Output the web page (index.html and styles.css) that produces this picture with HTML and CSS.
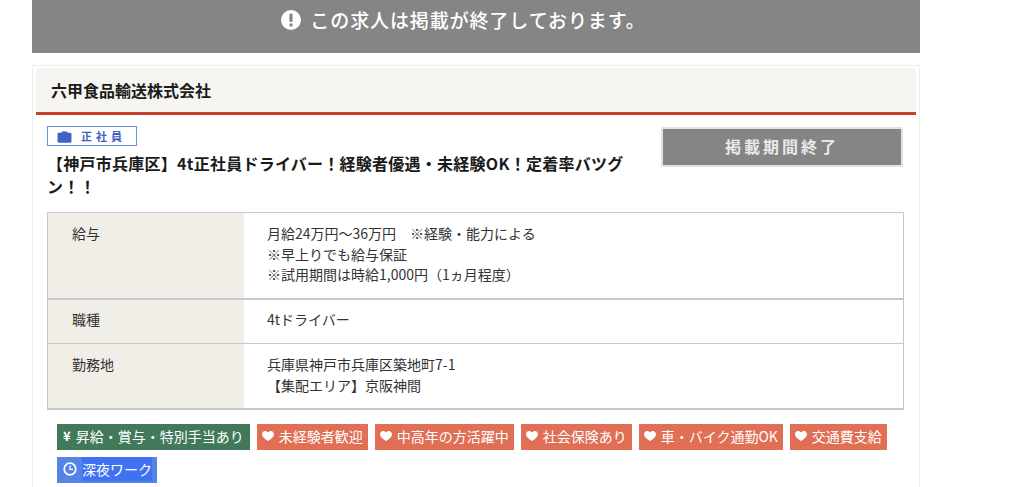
FILE: index.html
```html
<!DOCTYPE html>
<html lang="ja">
<head>
<meta charset="utf-8">
<title>求人</title>
<link rel="stylesheet" href="styles.css">
</head>
<body>
<main class="page">
  <div class="banner">
    <svg class="banner-icon" viewBox="0 0 20 20" width="20" height="20"><circle cx="10" cy="10" r="10" fill="#fff"/><rect x="8.4" y="3.5" width="3.2" height="8.5" rx="1.2" fill="#858585"/><circle cx="10" cy="15" r="1.7" fill="#858585"/></svg>
    <span>この求人は掲載が終了しております。</span>
  </div>
  <section class="card">
    <h2 class="company">六甲食品輸送株式会社</h2>
    <div class="summary">
      <div class="summary-main">
        <div class="emp-type">
          <svg viewBox="0 0 16 14" width="15" height="13"><path d="M5 3V1.500h6V3h3.200c.7 0 1.300.6 1.300 1.300V12.500c0 .7-.6 1.300-1.300 1.300H1.800C1.100 13.800.5 13.200.5 12.500V4.300C.5 3.600 1.100 3 1.800 3z" fill="#3f62c4"/></svg>
          <span>正社員</span>
        </div>
        <h3 class="job-title">【神戸市兵庫区】4t正社員ドライバー！経験者優遇・未経験OK！定着率バツグン！！</h3>
      </div>
      <div class="closed-btn">掲載期間終了</div>
    </div>
    <dl class="info">
      <div class="row row-salary">
        <dt>給与</dt>
        <dd>月給24万円～36万円　※経験・能力による<br>※早上りでも給与保証<br>※試用期間は時給1,000円（1ヵ月程度）</dd>
      </div>
      <div class="row row-type">
        <dt>職種</dt>
        <dd>4tドライバー</dd>
      </div>
      <div class="row row-place">
        <dt>勤務地</dt>
        <dd>兵庫県神戸市兵庫区築地町7-1<br>【集配エリア】京阪神間</dd>
      </div>
    </dl>
    <ul class="tags">
      <li class="tag tag-green"><span class="yen">¥</span>昇給・賞与・特別手当あり</li>
      <li class="tag tag-coral"><svg class="heart" viewBox="0 0 12 10" width="12" height="10"><path d="M6 10C2 7.500 0 5.600 0 3.200 0 1.300 1.400 0 3.100 0 4.300 0 5.400.6 6 1.600 6.600.6 7.700 0 8.900 0 10.600 0 12 1.300 12 3.200 12 5.600 10 7.500 6 10z" fill="#fff"/></svg>未経験者歓迎</li>
      <li class="tag tag-coral"><svg class="heart" viewBox="0 0 12 10" width="12" height="10"><path d="M6 10C2 7.500 0 5.600 0 3.200 0 1.300 1.400 0 3.100 0 4.300 0 5.400.6 6 1.600 6.600.6 7.700 0 8.900 0 10.600 0 12 1.300 12 3.200 12 5.600 10 7.500 6 10z" fill="#fff"/></svg>中高年の方活躍中</li>
      <li class="tag tag-coral"><svg class="heart" viewBox="0 0 12 10" width="12" height="10"><path d="M6 10C2 7.500 0 5.600 0 3.200 0 1.300 1.400 0 3.100 0 4.300 0 5.400.6 6 1.600 6.600.6 7.700 0 8.900 0 10.600 0 12 1.300 12 3.200 12 5.600 10 7.500 6 10z" fill="#fff"/></svg>社会保険あり</li>
      <li class="tag tag-coral"><svg class="heart" viewBox="0 0 12 10" width="12" height="10"><path d="M6 10C2 7.500 0 5.600 0 3.200 0 1.300 1.400 0 3.100 0 4.300 0 5.400.6 6 1.600 6.600.6 7.700 0 8.900 0 10.600 0 12 1.300 12 3.200 12 5.600 10 7.500 6 10z" fill="#fff"/></svg>車・バイク通勤OK</li>
      <li class="tag tag-coral"><svg class="heart" viewBox="0 0 12 10" width="12" height="10"><path d="M6 10C2 7.500 0 5.600 0 3.200 0 1.300 1.400 0 3.100 0 4.300 0 5.400.6 6 1.600 6.600.6 7.700 0 8.900 0 10.600 0 12 1.300 12 3.200 12 5.600 10 7.500 6 10z" fill="#fff"/></svg>交通費支給</li>
      <li class="tag tag-blue"><svg class="clock" viewBox="0 0 16 16" width="14" height="14"><circle cx="8" cy="8" r="6.600" fill="none" stroke="#fff" stroke-width="2"/><path d="M8 4v4.500h3.500" fill="none" stroke="#fff" stroke-width="1.500"/></svg><span class="tag-hl">深夜ワーク</span></li>
    </ul>
  </section>
</main>
</body>
</html>
```
FILE: styles.css
```css
* { box-sizing: border-box; }
html, body { margin: 0; padding: 0; height: 487px; overflow: hidden; background: #fff; }
body { font-family: "Noto Sans CJK JP", "Noto Sans", sans-serif; color: #222; }
.page { width: 888px; margin-left: 32px; height: 487px; overflow: hidden; }

.banner {
  height: 53px; background: #858585; color: #fff;
  display: flex; align-items: center; justify-content: center; gap: 9px;
  padding-bottom: 14px; padding-right: 25px;
  font-size: 19px; font-weight: 500; letter-spacing: .9px; line-height: 26px;
}

.card {
  margin-top: 12px; height: 430px;
  border: 1px solid #eee; padding: 2px 3px 0;
}
.company {
  margin: 0; height: 47px; padding: 0 15px;
  background: #f6f5f1; border-bottom: 3px solid #c9402a; border-radius: 4px 4px 0 0;
  font-size: 16px; font-weight: 700; line-height: 44px; color: #1c1c1c;
}

.summary { display: flex; justify-content: space-between; align-items: flex-start; padding: 11px 13px 0 11px; }
.summary-main { width: 595px; }
.emp-type {
  width: 90px; height: 20px; border: 1px solid #6f8fdd; background: #fff;
  display: flex; align-items: center; gap: 9px; padding-left: 9px;
  color: #3f62c4; font-size: 11px; font-weight: 700; letter-spacing: 4px;
}
.job-title {
  margin: 6px 0 0; font-size: 16px; font-weight: 700; line-height: 23px; color: #1a1a1a;
  letter-spacing: .25px;
}
.closed-btn {
  width: 242px; height: 40px; margin-top: 1px; background: #858585; border: 2px solid #e2e2e2; border-radius: 2px;
  color: #e8e8e8; text-align: center; font-size: 16px; font-weight: 700; letter-spacing: 3px; line-height: 34px;
}

.info {
  margin: 14px 12px 0 11px; border: 1px solid #c8c8c8; border-bottom-width: 2px;
  font-size: 14px; line-height: 20.5px; color: #333;
}
.row { display: flex; border-bottom: 1px solid #c8c8c8; }
.row:last-child { border-bottom: 0; }
.row-salary { height: 87px; border-bottom-width: 2px; }
.row-type { height: 44px; }
.row-place { height: 64px; }
.info dt { width: 196px; background: #f1eee8; padding: 10px 0 0 24px; }
.info dd { margin: 0; padding: 10px 0 0 23px; }
.row-type dt, .row-type dd { padding-top: 9px; }

.tags {
  list-style: none; margin: 14px 0 0; padding: 0 20px 0 21px;
  display: flex; flex-wrap: wrap; gap: 7px;
}
.tag {
  height: 26px; padding: 0 5px 2px; display: flex; align-items: center; gap: 5px;
  color: #fff; font-size: 14px; line-height: 24px; white-space: nowrap;
}
.tag-green { background: #41795a; padding: 0 6px 2px; }
.tag-coral { background: #e06f55; }
.tag-blue { background: #5583e6; padding-left: 6px; }
.tag-hl { background: #3f71f2; }
.yen { font-weight: 700; font-size: 13px; }
```
